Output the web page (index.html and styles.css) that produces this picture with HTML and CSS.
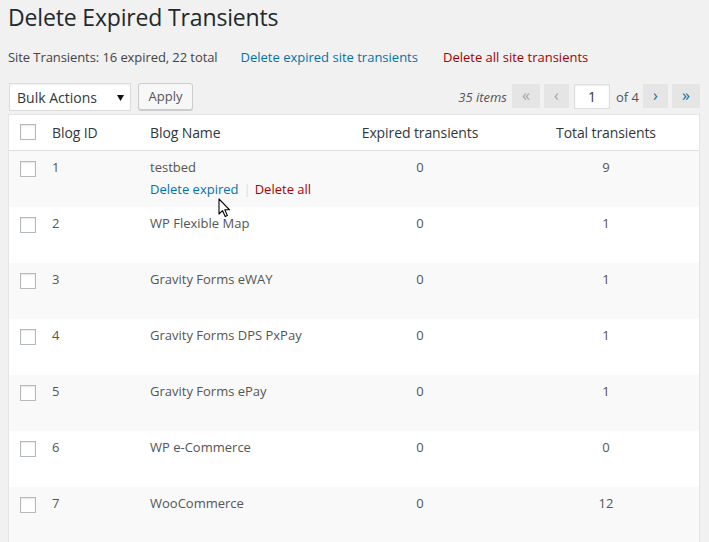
FILE: index.html
```html
<!DOCTYPE html>
<html lang="en">
<head>
<meta charset="utf-8">
<title>Delete Expired Transients</title>
<link rel="stylesheet" href="styles.css">
</head>
<body>
<div class="wrap">
  <h1 class="title">Delete Expired Transients</h1>
  <p class="summary"><span class="stats">Site Transients: 16 expired, 22 total</span><a class="link">Delete expired site transients</a><a class="link danger">Delete all site transients</a></p>

  <div class="tablenav">
    <div class="actions">
      <div class="select"><span>Bulk Actions</span><svg class="caret" width="7" height="6" viewBox="0 0 7 6"><path d="M0 0 H7 L3.5 6 Z" fill="#111"/></svg></div>
      <div class="button">Apply</div>
    </div>
    <div class="pages">
      <span class="count">35 items</span>
      <span class="nav wide disabled">«</span>
      <span class="nav disabled">‹</span>
      <span class="current">1</span>
      <span class="of">of 4</span>
      <span class="nav">›</span>
      <span class="nav wide">»</span>
    </div>
  </div>

  <table class="list">
    <colgroup>
      <col class="c-check"><col class="c-id"><col class="c-name"><col class="c-exp"><col class="c-total">
    </colgroup>
    <thead>
      <tr>
        <th class="check"><span class="cb"></span></th>
        <th>Blog ID</th>
        <th>Blog Name</th>
        <th class="num">Expired transients</th>
        <th class="num">Total transients</th>
      </tr>
    </thead>
    <tbody>
      <tr class="alt">
        <td class="check"><span class="cb"></span></td>
        <td>1</td>
        <td>testbed<div class="row-actions"><a class="link">Delete expired</a><span class="sep">|</span><a class="link danger">Delete all</a></div></td>
        <td class="num">0</td>
        <td class="num">9</td>
      </tr>
      <tr>
        <td class="check"><span class="cb"></span></td>
        <td>2</td>
        <td>WP Flexible Map<div class="row-actions empty"></div></td>
        <td class="num">0</td>
        <td class="num">1</td>
      </tr>
      <tr class="alt">
        <td class="check"><span class="cb"></span></td>
        <td>3</td>
        <td>Gravity Forms eWAY<div class="row-actions empty"></div></td>
        <td class="num">0</td>
        <td class="num">1</td>
      </tr>
      <tr>
        <td class="check"><span class="cb"></span></td>
        <td>4</td>
        <td>Gravity Forms DPS PxPay<div class="row-actions empty"></div></td>
        <td class="num">0</td>
        <td class="num">1</td>
      </tr>
      <tr class="alt">
        <td class="check"><span class="cb"></span></td>
        <td>5</td>
        <td>Gravity Forms ePay<div class="row-actions empty"></div></td>
        <td class="num">0</td>
        <td class="num">1</td>
      </tr>
      <tr>
        <td class="check"><span class="cb"></span></td>
        <td>6</td>
        <td>WP e-Commerce<div class="row-actions empty"></div></td>
        <td class="num">0</td>
        <td class="num">0</td>
      </tr>
      <tr class="alt">
        <td class="check"><span class="cb"></span></td>
        <td>7</td>
        <td>WooCommerce<div class="row-actions empty"></div></td>
        <td class="num">0</td>
        <td class="num">12</td>
      </tr>
    </tbody>
  </table>
</div>

<svg class="cursor" width="13" height="20" viewBox="0 0 13 20">
  <path d="M1 1 L1 16 L4.5 12.6 L7.2 18.6 L9.4 17.6 L6.8 11.8 L11.6 11.8 Z" fill="#fff" stroke="#000" stroke-width="1.1" stroke-linejoin="round"/>
</svg>
</body>
</html>
```

FILE: styles.css
```css
html, body {
  margin: 0;
  padding: 0;
  background: #f1f1f1;
}

body {
  font-family: "Open Sans", "Liberation Sans", sans-serif;
  font-size: 13px;
  color: #444;
  overflow: hidden;
}

.wrap {
  width: 692px;
  padding-left: 8px;
}

.title {
  margin: 0;
  padding: 3px 0 0;
  font-size: 23px;
  font-weight: 400;
  line-height: 29px;
  color: #23282d;
  letter-spacing: -0.16px;
}

.summary {
  margin: 15px 0 0;
  line-height: 20px;
  display: flex;
}

.summary .stats {
  letter-spacing: -0.08px;
}

.summary .link {
  margin-left: 23px;
}

.summary .link.danger {
  margin-left: 25px;
}

.link {
  color: #0073aa;
  text-decoration: none;
}

.link.danger {
  color: #a00;
}

.tablenav {
  margin-top: 16px;
  height: 31px;
  display: flex;
  justify-content: space-between;
  align-items: flex-start;
}

.actions {
  display: flex;
  align-items: flex-start;
}

.select {
  margin-left: 1px;
  width: 122px;
  height: 28px;
  box-sizing: border-box;
  border: 1px solid #ddd;
  background: #fff;
  box-shadow: inset 0 1px 2px rgba(0,0,0,.07);
  display: flex;
  align-items: center;
  justify-content: space-between;
  padding: 1px 6px 0 7px;
  font-size: 14px;
  color: #32373c;
}

.select span {
  line-height: 26px;
}

.caret {
  display: block;
}

.button {
  margin-left: 7px;
  width: 55px;
  height: 27px;
  box-sizing: border-box;
  border: 1px solid #ccc;
  border-radius: 3px;
  background: #f7f7f7;
  box-shadow: 0 1px 0 #ccc;
  color: #555;
  font-size: 13px;
  line-height: 25px;
  text-align: center;
}

.pages {
  display: flex;
  align-items: center;
  margin-top: 1px;
  height: 25px;
}

.count {
  font-style: italic;
  color: #555;
  margin-right: 5px;
}

.nav {
  width: 25px;
  height: 24px;
  margin-top: -1px;
  background: #e5e5e5;
  color: #0073aa;
  font-size: 16px;
  line-height: 22px;
  text-align: center;
  margin-left: 4px;
}

.nav.wide {
  width: 28px;
}

.count + .nav {
  margin-left: 0;
}

.nav.disabled {
  color: #a0a5aa;
}

.current {
  margin-left: 5px;
  width: 36px;
  height: 25px;
  box-sizing: border-box;
  border: 1px solid #ddd;
  background: #fff;
  box-shadow: inset 0 1px 2px rgba(0,0,0,.07);
  font-size: 14px;
  line-height: 23px;
  text-align: center;
  color: #32373c;
}

.of {
  margin-left: 6px;
  color: #555;
}

.list {
  width: 692px;
  table-layout: fixed;
  border-collapse: separate;
  border-spacing: 0;
  border: 1px solid #e5e5e5;
  background: #fff;
  box-shadow: 0 1px 1px rgba(0,0,0,.04);
}

.c-check { width: 33px; }
.c-id { width: 98px; }
.c-name { width: 187px; }
.c-exp { width: 186px; }
.c-total { width: 186px; }

.list th {
  text-align: left;
  font-weight: 400;
  font-size: 14px;
  line-height: 19px;
  color: #32373c;
  padding: 8px 10px;
  border-bottom: 1px solid #e1e1e1;
  vertical-align: top;
  letter-spacing: -0.1px;
}

.list td {
  padding: 7px 10px 8px;
  line-height: 19.5px;
  font-size: 13px;
  color: #555;
  vertical-align: top;
}

.list .num {
  text-align: center;
}

.list th.check {
  padding: 9px 0 0 11px;
}

.list td.check {
  padding: 10px 0 0 11px;
}

.cb {
  display: block;
  width: 16px;
  height: 16px;
  box-sizing: border-box;
  border: 1px solid #b4b9be;
  background: #fff;
  box-shadow: inset 0 1px 2px rgba(0,0,0,.1);
}

.list tr.alt td {
  background: #f9f9f9;
}

.row-actions {
  padding-top: 2px;
  height: 19.5px;
  display: flex;
}

.row-actions .sep {
  color: #ddd;
  margin: 0 4px 0 5px;
}

.cursor {
  position: absolute;
  left: 218px;
  top: 198px;
}
```
